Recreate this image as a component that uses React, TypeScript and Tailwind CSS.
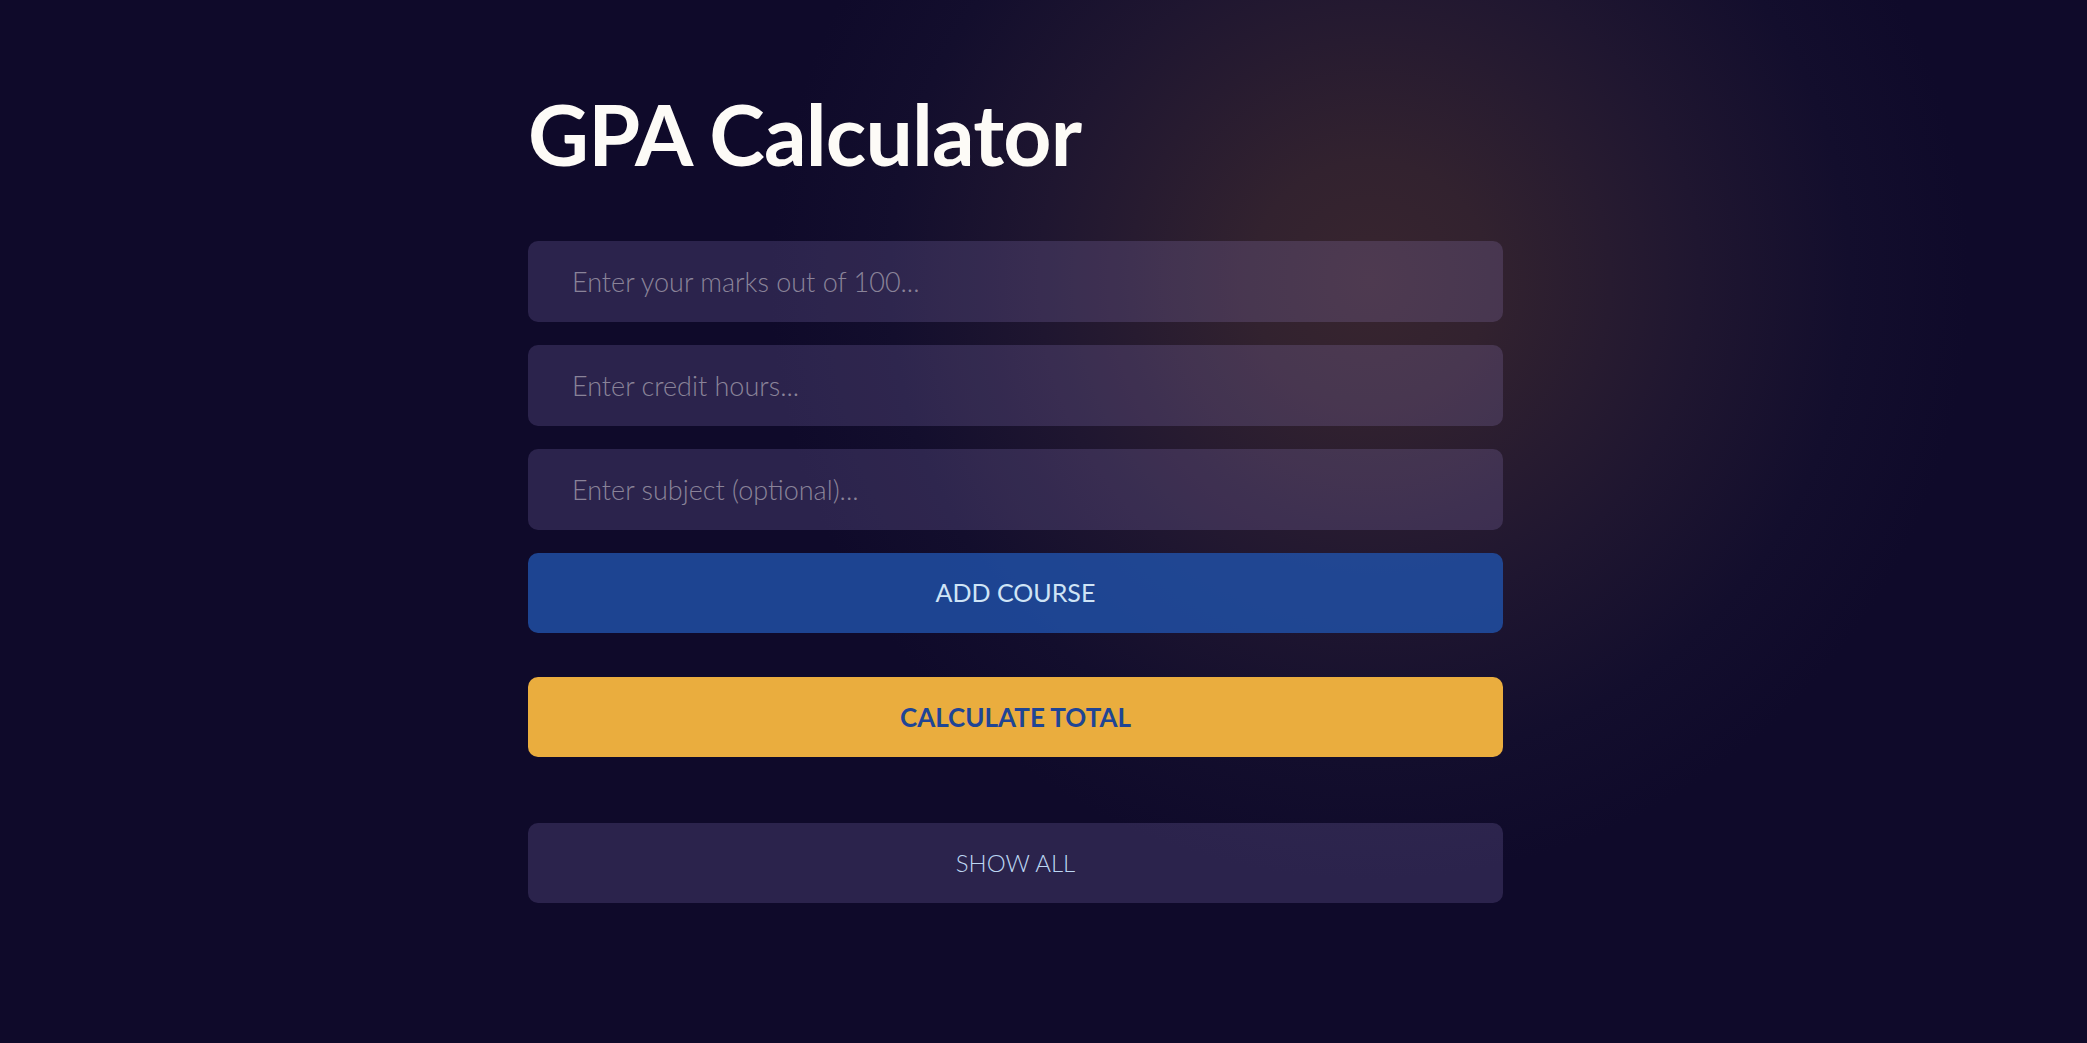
import { useState } from "react";

export default function App() {
  const [marks, setMarks] = useState("");
  const [hours, setHours] = useState("");
  const [subject, setSubject] = useState("");

  const inputCls =
    "w-full h-[81px] rounded-[10px] bg-[#c0a8ff]/16 pl-[44px] pr-4 text-[27px] font-light text-[#d8d4ea] placeholder:text-[#8a8399] outline-none";

  return (
    <div className="min-h-screen w-full bg-[#0f0a2a] bg-[radial-gradient(circle_600px_at_1370px_280px,#38252f_0%,#32222f_20%,#271b30_40%,#1f1630_55%,#130e2d_80%,#0f0a2a_100%)] font-['Lato',sans-serif]">
      <div className="ml-[528px] w-[975px] pt-[92px] flex flex-col">
        <h1 className="text-[84px] leading-none font-bold tracking-[-0.01em] text-[#fdfbf7]">GPA Calculator</h1>

        <div className="mt-[65px] flex flex-col gap-[23px]">
          <input className={inputCls} placeholder="Enter your marks out of 100..." value={marks} onChange={e => setMarks(e.target.value)} />
          <input className={inputCls} placeholder="Enter credit hours..." value={hours} onChange={e => setHours(e.target.value)} />
          <input className={inputCls} placeholder="Enter subject (optional)..." value={subject} onChange={e => setSubject(e.target.value)} />
          <button className="h-[80px] rounded-[10px] bg-[#2053ab]/80 text-[25px] text-[#cfe4f6] uppercase">Add Course</button>
        </div>

        <button className="mt-[44px] h-[80px] rounded-[10px] bg-[#eaad3e] text-[26px] font-bold text-[#1f4595] uppercase">Calculate Total</button>

        <button className="mt-[66px] h-[80px] rounded-[10px] bg-[#c0a8ff]/16 text-[24px] font-light text-[#bcd6f2] uppercase">Show All</button>
      </div>
    </div>
  );
}
